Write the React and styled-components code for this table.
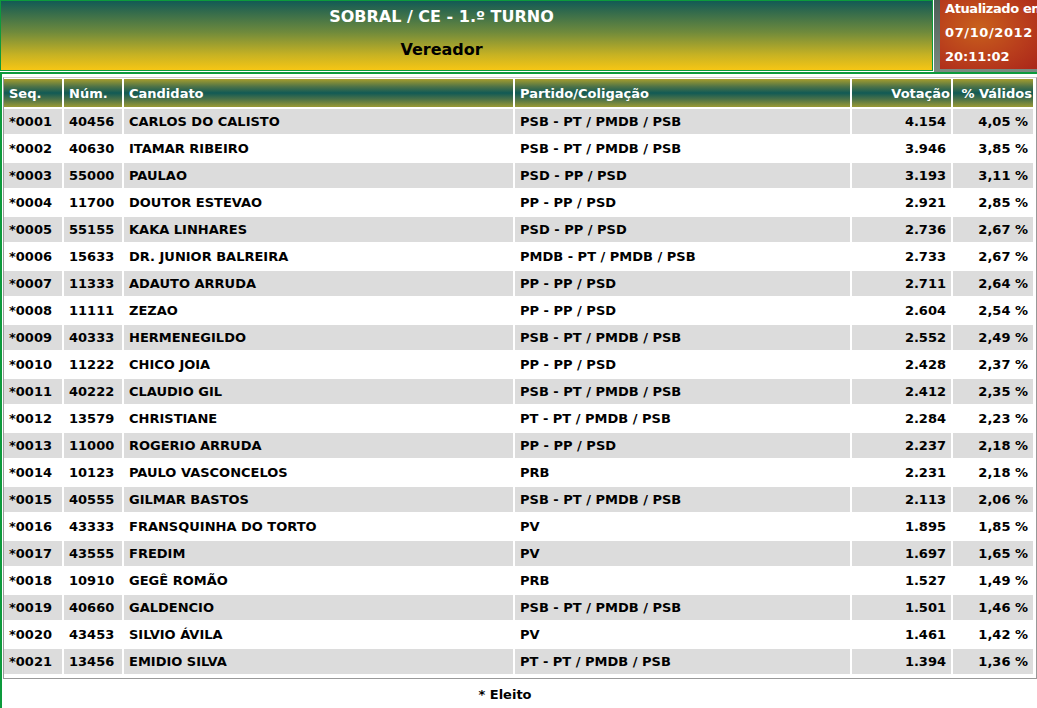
import React from 'react';
import styled, { createGlobalStyle } from 'styled-components';

const GlobalStyle = createGlobalStyle`
  body {
    margin: 0;
    background: #fff;
    font-family: "DejaVu Sans", Verdana, sans-serif;
    font-weight: bold;
    font-size: 13px;
    color: #000;
  }
`;

const Page = styled.div`
  width: 1037px;
  height: 708px;
  overflow: hidden;
  display: flex;
  flex-direction: column;
`;

const TopArea = styled.div`
  display: flex;
  height: 72px;
  background: linear-gradient(#4d5e57, #7b8a80);
  border-bottom: 2px solid #0d9a3c;
`;

const Banner = styled.div`
  width: 933px;
  height: 71px;
  border: 1px solid #0d9a3c;
  outline: 1px solid #fff;
  background: linear-gradient(#125a55 0%, #6f8a3c 45%, #c7b223 78%, #f6c614 100%);
  display: flex;
  flex-direction: column;
  align-items: center;
  padding-right: 50px;
  box-sizing: border-box;
`;

const Title = styled.div`
  color: #fff;
  font-size: 16px;
  margin-top: 6px;
`;

const Subtitle = styled.div`
  color: #000;
  font-size: 16px;
  margin-top: 14px;
`;

const UpdateBox = styled.div`
  margin-left: 7px;
  flex: 1;
  height: 69px;
  background: radial-gradient(ellipse at 40% 40%, #c8601c 0%, #b83c1c 60%, #aa261a 100%);
  color: #fff;
  padding-left: 5px;
  white-space: nowrap;
  overflow: hidden;
`;

const UpdateLines = styled.div`
  margin-top: -3px;
  line-height: 24px;
  font-size: 13px;
`;

const UpdateLine = styled.div`
  letter-spacing: ${(p) => p.$spacing || '0'};
`;

const Content = styled.div`
  flex: 1;
  border-left: 2px solid #0d9a3c;
  padding: 3px 0 0 1px;
  display: flex;
  flex-direction: column;
`;

const TableBox = styled.div`
  border: 1px solid #999;
  border-top-color: #ccc;
  padding-bottom: 2px;
`;

const Table = styled.table`
  width: calc(100% + 1px);
  border-collapse: separate;
  border-spacing: 2px;
  margin: -1px 0 0 -2px;
`;

const Th = styled.th`
  height: 28px;
  padding: 0 ${(p) => (p.$right ? '1px' : '5px')};
  text-align: ${(p) => (p.$right ? 'right' : 'left')};
  color: #fff;
  font-size: 13px;
  background: linear-gradient(#a59d2e 0%, #4b7148 28%, #115a55 50%, #4b7148 72%, #9a9a36 100%);
  width: ${(p) => p.$w};
`;

const Row = styled.tr`
  background: ${(p) => (p.$odd ? '#dcdcdc' : '#fff')};
`;

const Td = styled.td`
  height: 25px;
  padding: 0 5px;
  text-align: ${(p) => (p.$right ? 'right' : 'left')};
  white-space: nowrap;
`;

const Footer = styled.div`
  text-align: center;
  margin-top: 8px;
  padding-right: 30px;
  font-size: 13px;
`;

const data = [
  ['40456', 'CARLOS DO CALISTO', 'PSB - PT / PMDB / PSB', '4.154', '4,05 %'],
  ['40630', 'ITAMAR RIBEIRO', 'PSB - PT / PMDB / PSB', '3.946', '3,85 %'],
  ['55000', 'PAULAO', 'PSD - PP / PSD', '3.193', '3,11 %'],
  ['11700', 'DOUTOR ESTEVAO', 'PP - PP / PSD', '2.921', '2,85 %'],
  ['55155', 'KAKA LINHARES', 'PSD - PP / PSD', '2.736', '2,67 %'],
  ['15633', 'DR. JUNIOR BALREIRA', 'PMDB - PT / PMDB / PSB', '2.733', '2,67 %'],
  ['11333', 'ADAUTO ARRUDA', 'PP - PP / PSD', '2.711', '2,64 %'],
  ['11111', 'ZEZAO', 'PP - PP / PSD', '2.604', '2,54 %'],
  ['40333', 'HERMENEGILDO', 'PSB - PT / PMDB / PSB', '2.552', '2,49 %'],
  ['11222', 'CHICO JOIA', 'PP - PP / PSD', '2.428', '2,37 %'],
  ['40222', 'CLAUDIO GIL', 'PSB - PT / PMDB / PSB', '2.412', '2,35 %'],
  ['13579', 'CHRISTIANE', 'PT - PT / PMDB / PSB', '2.284', '2,23 %'],
  ['11000', 'ROGERIO ARRUDA', 'PP - PP / PSD', '2.237', '2,18 %'],
  ['10123', 'PAULO VASCONCELOS', 'PRB', '2.231', '2,18 %'],
  ['40555', 'GILMAR BASTOS', 'PSB - PT / PMDB / PSB', '2.113', '2,06 %'],
  ['43333', 'FRANSQUINHA DO TORTO', 'PV', '1.895', '1,85 %'],
  ['43555', 'FREDIM', 'PV', '1.697', '1,65 %'],
  ['10910', 'GEGÊ ROMÃO', 'PRB', '1.527', '1,49 %'],
  ['40660', 'GALDENCIO', 'PSB - PT / PMDB / PSB', '1.501', '1,46 %'],
  ['43453', 'SILVIO ÁVILA', 'PV', '1.461', '1,42 %'],
  ['13456', 'EMIDIO SILVA', 'PT - PT / PMDB / PSB', '1.394', '1,36 %'],
];

const App = () => {
  return (
    <Page>
      <GlobalStyle />
      <TopArea>
        <Banner>
          <Title>SOBRAL / CE - 1.º TURNO</Title>
          <Subtitle>Vereador</Subtitle>
        </Banner>
        <UpdateBox>
          <UpdateLines>
            <UpdateLine $spacing="-0.4px">Atualizado em</UpdateLine>
            <UpdateLine $spacing="0.6px">07/10/2012</UpdateLine>
            <UpdateLine>20:11:02</UpdateLine>
          </UpdateLines>
        </UpdateBox>
      </TopArea>
      <Content>
        <TableBox>
          <Table>
            <thead>
              <tr>
                <Th $w="48px">Seq.</Th>
                <Th $w="48px">Núm.</Th>
                <Th $w="379px">Candidato</Th>
                <Th $w="325px">Partido/Coligação</Th>
                <Th $w="97px" $right>Votação</Th>
                <Th $right>% Válidos</Th>
              </tr>
            </thead>
            <tbody>
              {data.map((d, i) => (
                <Row key={d[0]} $odd={i % 2 === 0}>
                  <Td>*{String(i + 1).padStart(4, '0')}</Td>
                  <Td>{d[0]}</Td>
                  <Td>{d[1]}</Td>
                  <Td>{d[2]}</Td>
                  <Td $right>{d[3]}</Td>
                  <Td $right>{d[4]}</Td>
                </Row>
              ))}
            </tbody>
          </Table>
        </TableBox>
        <Footer>* Eleito</Footer>
      </Content>
    </Page>
  );
};

export default App;
